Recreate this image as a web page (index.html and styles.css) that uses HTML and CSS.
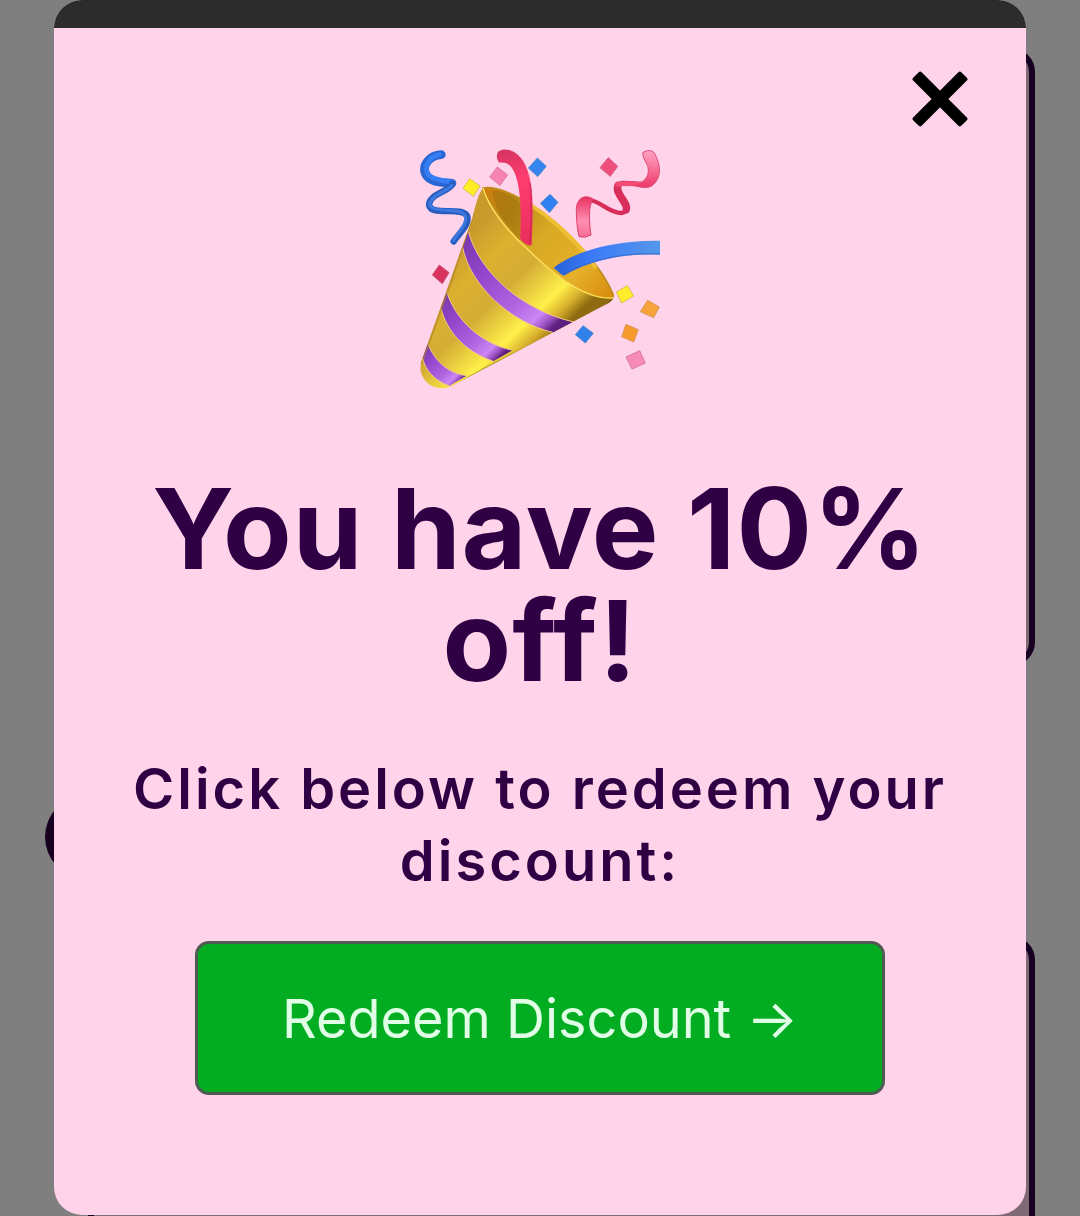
FILE: index.html
```
<!DOCTYPE html>
<html lang="en">
	<head>
		<meta charset="UTF-8">
		<meta name="viewport" content="width=device-width, initial-scale=1">
		<title>You have 10% off!</title>
		<link rel="stylesheet" href="styles.css">
	</head>
	<body>
		<!-- page behind the popup -->
		<div class="page" aria-hidden="true">
			<div class="card"></div>
			<div class="pill"></div>
			<div class="card"></div>
		</div>

		<div class="overlay">
			<div class="modal" role="dialog" aria-modal="true" aria-labelledby="title">
				<div class="bar"></div>
				<div class="head">
					<button type="button" class="close" aria-label="Close">
						<svg viewBox="-28 -28 56 56">
							<rect x="-34" y="-6" width="68" height="12" rx="2" transform="rotate(45)"/>
							<rect x="-34" y="-6" width="68" height="12" rx="2" transform="rotate(-45)"/>
						</svg>
					</button>
				</div>
				<div class="content">
					<svg class="popper" viewBox="30 27 720 720" aria-hidden="true">
						<defs>
							<linearGradient id="gold" gradientUnits="userSpaceOnUse" x1="120" y1="330" x2="400" y2="620">
								<stop offset="0" stop-color="#c99a2c"/>
								<stop offset=".25" stop-color="#dcb02f"/>
								<stop offset=".5" stop-color="#d5ad35"/>
								<stop offset=".78" stop-color="#fff04a"/>
								<stop offset=".9" stop-color="#d8b02c"/>
								<stop offset="1" stop-color="#8f6a10"/>
							</linearGradient>
							<linearGradient id="inside" gradientUnits="userSpaceOnUse" x1="220" y1="150" x2="600" y2="470">
								<stop offset="0" stop-color="#d07d0c"/>
								<stop offset=".2" stop-color="#b88a18"/>
								<stop offset=".45" stop-color="#d8a924"/>
								<stop offset=".75" stop-color="#e6b02a"/>
								<stop offset="1" stop-color="#d98e10"/>
							</linearGradient>
							<linearGradient id="purple" x1="0" y1="0" x2="1" y2="1">
								<stop offset="0" stop-color="#7436a8"/>
								<stop offset=".3" stop-color="#9446cc"/>
								<stop offset=".6" stop-color="#b064e0"/>
								<stop offset=".76" stop-color="#cc86f4"/>
								<stop offset=".83" stop-color="#9a4fc0"/>
								<stop offset=".88" stop-color="#5e2080"/>
							</linearGradient>
							<linearGradient id="pinkA" gradientUnits="userSpaceOnUse" x1="265" y1="40" x2="350" y2="310">
								<stop offset="0" stop-color="#d83564"/>
								<stop offset=".35" stop-color="#ff3d70"/>
								<stop offset="1" stop-color="#e92e5c"/>
							</linearGradient>
							<linearGradient id="blueA" gradientUnits="userSpaceOnUse" x1="440" y1="0" x2="750" y2="0">
								<stop offset="0" stop-color="#2a63d8"/>
								<stop offset=".35" stop-color="#3b7bf8"/>
								<stop offset="1" stop-color="#5597ea"/>
							</linearGradient>
							<linearGradient id="pinkB" gradientUnits="userSpaceOnUse" x1="0" y1="170" x2="0" y2="292">
								<stop offset="0" stop-color="#e8305f"/>
								<stop offset=".6" stop-color="#ff8fb2"/>
								<stop offset="1" stop-color="#f56c96"/>
							</linearGradient>
							<linearGradient id="pinkC" gradientUnits="userSpaceOnUse" x1="0" y1="30" x2="0" y2="140">
								<stop offset="0" stop-color="#ffa5c4"/>
								<stop offset=".5" stop-color="#f7739a"/>
								<stop offset="1" stop-color="#ec3a69"/>
							</linearGradient>
							<clipPath id="cone">
								<path d="M219 144C206 160 198 190 187 235L30 675C30 712 55 746 100 745C112 744 122 739 135 733L590 492C600 487 608 482 609 474C530 480 420 400 340 315C275 245 235 185 219 144Z"/>
							</clipPath>
						</defs>

						<!-- blue streamer, left -->
						<g fill="none" stroke-linecap="round" stroke-linejoin="round">
							<path d="M94 44C58 46 36 76 46 101C58 130 104 126 126 130" stroke="#2866d4" stroke-width="26"/>
							<path d="M88 44C54 52 40 82 56 105C76 124 106 120 126 127" stroke="#357df2" stroke-width="15"/>
							<path d="M126 132C122 153 57 161 57 195C63 231 154 198 171 227C181 252 150 277 131 304" stroke="#285dbd" stroke-width="19"/>
							<path d="M125 135C116 153 59 166 59 194C68 223 150 198 166 227C173 251 145 276 131 301" stroke="#3d78e0" stroke-width="9"/>
						</g>

						<!-- cone -->
						<path d="M219 144C255 135 325 166 390 213C480 275 575 380 609 462C616 491 560 491 500 455C390 385 240 260 219 144Z" fill="url(#inside)" stroke="#bd8c1c" stroke-width="5"/>
						<path d="M248 151C300 160 330 178 333 205L329 300C289 258 249 203 248 151Z" fill="#9a6c0b" opacity=".45"/>
						<path d="M335 180C420 225 512 315 558 385" fill="none" stroke="#edbf32" stroke-width="12"/>
						<g clip-path="url(#cone)">
							<path d="M219 144L100 200L20 760H200L640 520V460Z" fill="url(#gold)"/>
							<path d="M175 274C205 390 330 510 492 546L432 578C300 548 180 435 158 322Z" fill="url(#purple)"/>
							<path d="M110 455C138 541 211 609 308 631L250 664C160 633 109 570 93 505Z" fill="url(#purple)"/>
							<path d="M53 610C73 661 112 699 170 707L118 738C74 722 44 690 38 653Z" fill="url(#purple)"/>
							<path d="M175 274C205 390 330 510 492 546M158 322C180 435 300 548 432 578M110 455C138 541 211 609 308 631M93 505C109 570 160 633 250 664M53 610C73 661 112 699 170 707M38 653C44 690 74 722 118 738" fill="none" stroke="#f3cb83" stroke-width="3"/>
							<path d="M609 474C520 560 330 610 110 748L330 690L630 520Z" fill="#4d3200" opacity=".4"/>
							<path d="M190 220L125 420L34 672" fill="none" stroke="#aa7b28" stroke-width="7" opacity=".5"/>
						</g>
						<path d="M219 144C235 200 285 267 350 325C430 404 530 482 609 474" fill="none" stroke="#ffe05a" stroke-width="4"/>

						<!-- streamers out of the cone -->
						<path d="M268 68C260 60 258 46 264 36C276 22 315 26 338 61C373 115 370 205 365 316C352 318 340 307 330 296C335 209 332 122 306 84C296 70 284 66 268 68Z" fill="url(#pinkA)"/>
						<path d="M360 130C368 180 362 250 360 308" fill="none" stroke="#c92552" stroke-width="5" opacity=".6"/>
						<path d="M431 383C502 329 622 300 750 302V344C637 339 538 361 461 407C453 403 444 394 431 383Z" fill="url(#blueA)"/>
						<path d="M461 404C538 360 637 337 750 342" fill="none" stroke="#3565c6" stroke-width="4" opacity=".6"/>

						<!-- pink streamer, right -->
						<path d="M538 181C570 180 594 219 635 219C673 213 608 165 619 140C630 120 665 132 702 132" fill="none" stroke="#d72d5a" stroke-width="13"/>
						<path d="M624 136C615 164 656 186 649 209" fill="none" stroke="#d82e5b" stroke-width="22" stroke-linecap="round"/>
						<path d="M618 136C637 125 676 135 703 132" fill="none" stroke="#f24b77" stroke-width="14"/>
						<path d="M548 176C524 163 502 173 499 205C499 237 501 263 507 290Q526 295 543 285C537 245 535 202 548 176Z" fill="url(#pinkB)" stroke="#df426e" stroke-width="3"/>
						<path d="M699 37Q720 25 733 39C753 75 756 114 726 137C710 147 690 141 675 137C707 125 719 106 714 82C711 68 696 53 699 37Z" fill="url(#pinkC)" stroke="#e04a74" stroke-width="3"/>

						<!-- confetti -->
						<g stroke-width="3" stroke-linejoin="round">
							<path d="M382 54L409 79L383 110L355 84Z" fill="#3585ee" stroke="#5d91d4"/>
							<path d="M420 163L444 187L418 218L391 190Z" fill="#2f81f2" stroke="#5b8dd0"/>
							<path d="M519 557L550 580L526 609L496 584Z" fill="#2f80e8" stroke="#5b8dd0"/>
							<path d="M595 53L623 79L601 109L570 83Z" fill="#f04f7d" stroke="#d65c82"/>
							<path d="M88 375L117 398L97 431L67 405Z" fill="#d8325f" stroke="#c95274"/>
							<path d="M262 81L293 105L270 136L239 111Z" fill="#f783b0" stroke="#dd7ba3"/>
							<path d="M689 632L706 669L666 687L648 651Z" fill="#f78bb6" stroke="#d67b9f"/>
							<path d="M179 116L210 138L190 169L159 145Z" fill="#ffed28" stroke="#d8c350"/>
							<path d="M652 437L671 468L635 489L619 456Z" fill="#ffed2c" stroke="#d8bf50"/>
							<path d="M713 481L748 501L731 533L691 515Z" fill="#f8a23c" stroke="#dc9a58"/>
							<path d="M648 553L685 569L671 606L635 590Z" fill="#f79b2c" stroke="#dc9a58"/>
						</g>
					</svg>
					<h1 id="title">You have 10% off!</h1>
					<p>Click below to redeem your discount:</p>
					<button type="button" class="redeem">Redeem Discount →</button>
				</div>
			</div>
		</div>
	</body>
</html>
```
FILE: styles.css
```
*{padding: 0;margin: 0;box-sizing: border-box;}
body{height: 100vh;overflow: hidden;background: #fff;
	font-family: Inter, "Liberation Sans", sans-serif;
	color: #300045;}
button{font-family: inherit;cursor: pointer;}

/* page behind */
.page{height: 100%;overflow: hidden;padding: 48px 45px;}
.card{height: 618px;margin-left: 43px;border: 6px solid #300045;border-radius: 24px;background: #ffd3e9;}
.pill{width: 50%;height: 84px;margin: 129px 0 57px;border-radius: 42px;background: #300045;}

/* popup */
.overlay{position: fixed;top: 0;right: 0;bottom: 0;left: 0;
	padding: 0 5%;
	background: rgba(0,0,0,.5);}
.modal{border-radius: 28px;overflow: hidden;background: #ffd3e9;}
.bar{height: 28px;background: #2c2c2c;}
.head{display: flex;justify-content: flex-end;padding: 43px 58px 0;}
.close{width: 56px;height: 56px;border: 0;background: none;}
.close svg{display: block;width: 56px;height: 56px;fill: #000;}
.content{display: flex;flex-direction: column;align-items: center;
	padding: 22px 64px 120px;text-align: center;}
.popper{width: 240px;height: 240px;}
h1{margin-top: 83px;font-size: 112px;line-height: 112px;font-weight: 700;letter-spacing: 1px;}
p{margin-top: 57px;font-size: 56px;line-height: 72px;font-weight: 600;letter-spacing: 3px;}
.redeem{margin-top: 44px;padding: 2px 84px 0;
	font-size: 54px;line-height: 146px;font-weight: 400;color: #e0fde6;
	border: 3px solid #4f5a50;border-radius: 14px;background: #02ad21;}
```
